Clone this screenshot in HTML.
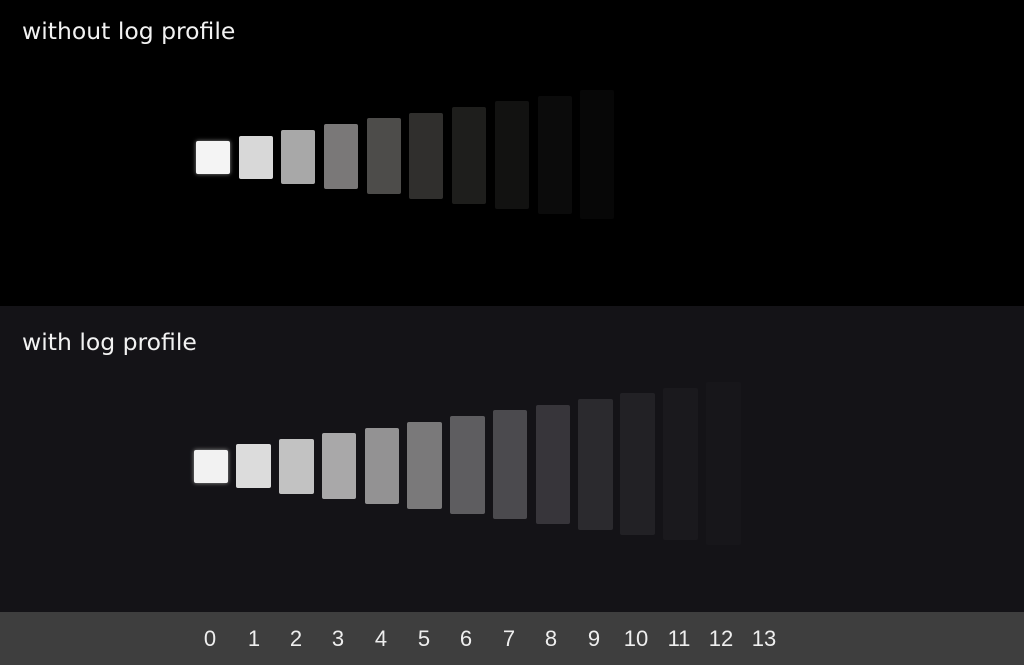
<!DOCTYPE html><html><head><style>
body{margin:0;width:1024px;height:665px;overflow:hidden;background:#000;position:relative;font-family:"DejaVu Sans",sans-serif}
div{position:absolute}
.p{border-radius:2px}
.t{color:#f2f2f2;font-size:23.5px;left:22px}
.n{top:626px;color:#eee;font:22px "Liberation Sans",sans-serif;width:40px;text-align:center}
</style></head><body>
<div style="left:0;top:306px;width:1024px;height:306px;background:#141317"></div>
<div style="left:0;top:612px;width:1024px;height:53px;background:#3e3e3e"></div>
<div class="t" style="top:17px">without log profile</div>
<div class="t" style="top:328px">with log profile</div>
<div class="p" style="left:196px;top:141px;width:34px;height:33px;background:#f4f4f4;box-shadow:0 0 4px #888"></div>
<div class="p" style="left:239px;top:136px;width:34px;height:43px;background:#d8d8d8"></div>
<div class="p" style="left:281px;top:130px;width:34px;height:54px;background:#a8a8a8"></div>
<div class="p" style="left:324px;top:124px;width:34px;height:65px;background:#7a7878"></div>
<div class="p" style="left:367px;top:118px;width:34px;height:76px;background:#4d4c4a"></div>
<div class="p" style="left:409px;top:113px;width:34px;height:86px;background:#302f2d"></div>
<div class="p" style="left:452px;top:107px;width:34px;height:97px;background:#1e1e1c"></div>
<div class="p" style="left:495px;top:101px;width:34px;height:108px;background:#121211"></div>
<div class="p" style="left:538px;top:96px;width:34px;height:118px;background:#0b0b0b"></div>
<div class="p" style="left:580px;top:90px;width:34px;height:129px;background:#070707"></div>
<div class="p" style="left:194px;top:450px;width:34px;height:33px;background:#f2f2f2;box-shadow:0 0 4px #999"></div>
<div class="p" style="left:236px;top:444px;width:35px;height:44px;background:#dcdcdc"></div>
<div class="p" style="left:279px;top:439px;width:35px;height:55px;background:#c2c2c2"></div>
<div class="p" style="left:322px;top:433px;width:34px;height:66px;background:#a9a8a9"></div>
<div class="p" style="left:365px;top:428px;width:34px;height:76px;background:#939293"></div>
<div class="p" style="left:407px;top:422px;width:35px;height:87px;background:#7a797a"></div>
<div class="p" style="left:450px;top:416px;width:35px;height:98px;background:#5e5d60"></div>
<div class="p" style="left:493px;top:410px;width:34px;height:109px;background:#4b4a4e"></div>
<div class="p" style="left:536px;top:405px;width:34px;height:119px;background:#37353a"></div>
<div class="p" style="left:578px;top:399px;width:35px;height:131px;background:#2b2a2e"></div>
<div class="p" style="left:620px;top:393px;width:35px;height:142px;background:#222125"></div>
<div class="p" style="left:663px;top:388px;width:35px;height:152px;background:#1a191d"></div>
<div class="p" style="left:706px;top:382px;width:35px;height:163px;background:#17161a"></div>
<div class="n" style="left:190px">0</div><div class="n" style="left:234px">1</div><div class="n" style="left:276px">2</div><div class="n" style="left:318px">3</div><div class="n" style="left:361px">4</div><div class="n" style="left:404px">5</div><div class="n" style="left:446px">6</div><div class="n" style="left:489px">7</div><div class="n" style="left:531px">8</div><div class="n" style="left:574px">9</div><div class="n" style="left:616px">10</div><div class="n" style="left:659px">11</div><div class="n" style="left:701px">12</div><div class="n" style="left:744px">13</div>
</body></html>
